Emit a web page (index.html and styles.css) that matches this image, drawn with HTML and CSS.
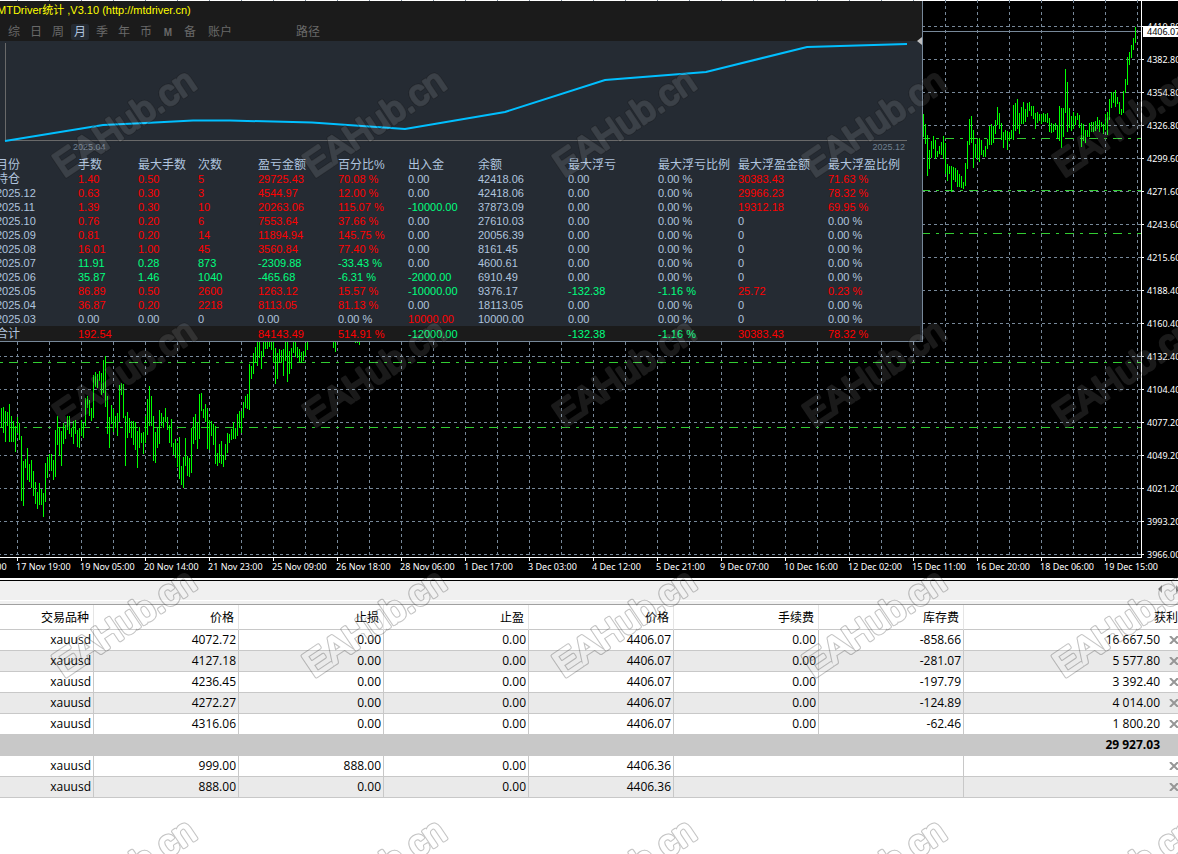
FILE: index.html
```html
<!DOCTYPE html>
<html lang="zh-CN">
<head>
    <meta charset="UTF-8">
    <title>MTDriver统计</title>
    <link rel="stylesheet" href="styles.css">
</head>
<body>

<main class="terminal">
    <section class="chart">
        <div class="plot-row">
            <svg class="plot" aria-label="xauusd">
                <defs>
                    <pattern id="gridX" x="17" y="0" width="32" height="6" patternUnits="userSpaceOnUse">
                        <rect width="1" height="3" fill="#778899"/>
                    </pattern>
                    <pattern id="gridY" x="4" y="26" width="6" height="33" patternUnits="userSpaceOnUse">
                        <rect width="3" height="1" fill="#778899"/>
                    </pattern>
                </defs>
                <rect width="100%" height="100%" fill="url(#gridX)"/>
                <rect width="100%" height="100%" fill="url(#gridY)"/>
                <rect y="31" width="100%" height="1" fill="#778899"/>
                <g id="orderLines" class="order-lines"></g>
                <path id="bars" class="bars"/>
            </svg>
            <div class="price-axis">
                <ul>
                    <li>4410.80</li>
                    <li>4382.80</li>
                    <li>4354.80</li>
                    <li>4326.80</li>
                    <li>4299.60</li>
                    <li>4271.60</li>
                    <li>4243.60</li>
                    <li>4215.60</li>
                    <li>4188.40</li>
                    <li>4160.40</li>
                    <li>4132.40</li>
                    <li>4104.40</li>
                    <li>4077.20</li>
                    <li>4049.20</li>
                    <li>4021.20</li>
                    <li>3993.20</li>
                    <li>3966.00</li>
                </ul>
                <span class="current-price">4406.07</span>
            </div>
        </div>
        <ul class="time-axis">
            <li>14 Nov 10:00</li>
            <li>17 Nov 19:00</li>
            <li>19 Nov 05:00</li>
            <li>20 Nov 14:00</li>
            <li>21 Nov 23:00</li>
            <li>25 Nov 09:00</li>
            <li>26 Nov 18:00</li>
            <li>28 Nov 06:00</li>
            <li>1 Dec 17:00</li>
            <li>3 Dec 03:00</li>
            <li>4 Dec 12:00</li>
            <li>5 Dec 21:00</li>
            <li>9 Dec 07:00</li>
            <li>10 Dec 16:00</li>
            <li>12 Dec 02:00</li>
            <li>15 Dec 11:00</li>
            <li>16 Dec 20:00</li>
            <li>18 Dec 06:00</li>
            <li>19 Dec 15:00</li>
        </ul>

        <div class="stats-panel">
            <header class="stats-header">
                <h1>MTDriver统计 ,V3.10 (http://mtdriver.cn)</h1>
                <nav class="tabs">
                    <button>综</button>
                    <button>日</button>
                    <button>周</button>
                    <button class="active">月</button>
                    <button>季</button>
                    <button>年</button>
                    <button>币</button>
                    <button class="letter">M</button>
                    <button>备</button>
                    <button class="wide">账户</button>
                    <button class="wide path-btn">路径</button>
                </nav>
            </header>
            <svg class="balance" height="100" aria-label="余额">
                <path d="M5.5 1V98.500H907" fill="none" stroke="#696969"/>
                <path d="M5 99L103 83L145 81L193 78.500H230L312 80.500L405 87L505 70L605 38L706 30L807 5L907 2" fill="none" stroke="#00bfff" stroke-width="2"/>
            </svg>
            <div class="balance-dates">
                <span>2025.04</span>
                <span>2025.12</span>
            </div>
            <table class="stats">
                <colgroup>
                    <col class="w-80"><col class="w-60"><col class="w-60"><col class="w-60"><col class="w-80"><col class="w-70">
                    <col class="w-70"><col class="w-90"><col class="w-90"><col class="w-80"><col class="w-90"><col>
                </colgroup>
                <thead>
                    <tr><th>月份</th><th>手数</th><th>最大手数</th><th>次数</th><th>盈亏金额</th><th>百分比%</th><th>出入金</th><th>余额</th><th>最大浮亏</th><th>最大浮亏比例</th><th>最大浮盈金额</th><th>最大浮盈比例</th></tr>
                </thead>
                <tbody id="statsRows"></tbody>
                <tfoot>
                    <tr><td>合计</td><td class="up">192.54</td><td></td><td></td><td class="up">84143.49</td><td class="up">514.91 %</td><td class="down">-12000.00</td><td></td><td class="down">-132.38</td><td class="down">-1.16 %</td><td class="up">30383.43</td><td class="up">78.32 %</td></tr>
                </tfoot>
            </table>
            <svg class="collapse" width="5" height="8"><path d="M0 4L5 0V8Z" fill="#c0c0c0"/></svg>
        </div>
    </section>

    <div class="splitter">
        <svg width="22" height="8"><path d="M2 4L6 0V8ZM24 4L20 0V8Z" fill="#8c8c8c"/></svg>
    </div>

    <section class="orders-wrap">
        <table class="orders">
            <colgroup>
                <col class="symbol"><col class="num"><col class="num"><col class="num"><col class="num"><col class="num"><col class="num"><col>
            </colgroup>
            <thead>
                <tr><th>交易品种</th><th>价格</th><th>止损</th><th>止盈</th><th>价格</th><th>手续费</th><th>库存费</th><th>获利</th></tr>
            </thead>
            <tbody>
                <tr><td>xauusd</td><td>4072.72</td><td>0.00</td><td>0.00</td><td>4406.07</td><td>0.00</td><td>-858.66</td><td>16 667.50<button aria-label="平仓"><svg width="9" height="8"><path d="M1 0L9 8M9 0L1 8"/></svg></button></td></tr>
                <tr><td>xauusd</td><td>4127.18</td><td>0.00</td><td>0.00</td><td>4406.07</td><td>0.00</td><td>-281.07</td><td>5 577.80<button aria-label="平仓"><svg width="9" height="8"><path d="M1 0L9 8M9 0L1 8"/></svg></button></td></tr>
                <tr><td>xauusd</td><td>4236.45</td><td>0.00</td><td>0.00</td><td>4406.07</td><td>0.00</td><td>-197.79</td><td>3 392.40<button aria-label="平仓"><svg width="9" height="8"><path d="M1 0L9 8M9 0L1 8"/></svg></button></td></tr>
                <tr><td>xauusd</td><td>4272.27</td><td>0.00</td><td>0.00</td><td>4406.07</td><td>0.00</td><td>-124.89</td><td>4 014.00<button aria-label="平仓"><svg width="9" height="8"><path d="M1 0L9 8M9 0L1 8"/></svg></button></td></tr>
                <tr><td>xauusd</td><td>4316.06</td><td>0.00</td><td>0.00</td><td>4406.07</td><td>0.00</td><td>-62.46</td><td>1 800.20<button aria-label="平仓"><svg width="9" height="8"><path d="M1 0L9 8M9 0L1 8"/></svg></button></td></tr>
                <tr class="total"><td colspan="8">29 927.03</td></tr>
                <tr><td>xauusd</td><td>999.00</td><td>888.00</td><td>0.00</td><td>4406.36</td><td colspan="2"></td><td><button aria-label="删除"><svg width="9" height="8"><path d="M1 0L9 8M9 0L1 8"/></svg></button></td></tr>
                <tr><td>xauusd</td><td>888.00</td><td>0.00</td><td>0.00</td><td>4406.36</td><td colspan="2"></td><td><button aria-label="删除"><svg width="9" height="8"><path d="M1 0L9 8M9 0L1 8"/></svg></button></td></tr>
            </tbody>
        </table>
    </section>

    <svg class="watermark" aria-hidden="true">
        <defs>
            <mask id="ring" maskUnits="userSpaceOnUse" x="-20" y="-50" width="220" height="80">
                <text class="mark" fill="#fff" stroke="#fff" stroke-width="4">EAHub.cn</text>
                <text class="mark" fill="#000" stroke="#000" stroke-width="2">EAHub.cn</text>
            </mask>
            <pattern id="marks" width="250" height="250" patternUnits="userSpaceOnUse">
                <g transform="translate(64 178) rotate(-34)">
                    <rect x="-20" y="-50" width="220" height="80" fill="#000" opacity="0.25" mask="url(#ring)"/>
                    <text class="mark" fill="#fff" stroke="#fff" stroke-width="3" opacity="0.1">EAHub.cn</text>
                </g>
            </pattern>
        </defs>
        <rect width="100%" height="100%" fill="url(#marks)"/>
    </svg>
</main>

<script src="script.js"></script>
</body>
</html>
```
FILE: styles.css
```css
* {
    box-sizing: border-box;
}
body {
    margin: 0;
    background: white;
    color: black;
    font-family: "Open Sans", "Noto Sans CJK SC", sans-serif;
    font-size: 12px;
}
ul {
    list-style: none;
    margin: 0;
    padding: 0;
}
button {
    border: none;
    background: none;
    padding: 0;
    font: inherit;
    color: inherit;
    cursor: pointer;
}
.terminal {
    position: relative;
    min-height: 100vh;
    overflow: hidden;
}

/* price chart */
.chart {
    position: relative;
    background: black;
    color: white;
    border-top: 1px solid white;
    font-family: "Noto Sans", sans-serif;
    font-size: 9px;
}
.plot-row {
    display: flex;
    height: 558px;
    margin-top: -1px;
}
.plot {
    flex: 1;
    min-width: 0;
    height: 100%;
    border-right: 1px solid white;
    border-bottom: 1px solid white;
}
.bars {
    stroke: #00ff00;
    fill: none;
}
.order-lines line {
    stroke: #32cd32;
    stroke-dasharray: 3 6 9 6;
}
.price-axis {
    position: relative;
    width: 36px;
    height: 570px;
    padding-top: 10px;
    overflow: hidden;
}
.price-axis li {
    position: relative;
    height: 33px;
    line-height: 33px;
    padding-left: 5px;
}
.price-axis li::before {
    content: "";
    position: absolute;
    left: 0;
    top: 16px;
    width: 2px;
    height: 1px;
    background: white;
}
.current-price {
    position: absolute;
    left: 1px;
    top: 26px;
    right: 0;
    height: 11px;
    line-height: 11px;
    padding-left: 4px;
    background: white;
    color: black;
}
.time-axis {
    display: flex;
    height: 20px;
    margin-left: -48px;
    overflow: hidden;
}
.time-axis li {
    position: relative;
    flex: 0 0 64px;
    line-height: 18px;
    white-space: nowrap;
}
.time-axis li::before {
    content: "";
    position: absolute;
    left: 1px;
    top: 0;
    width: 1px;
    height: 3px;
    background: white;
}

/* statistics window over the chart */
.stats-panel {
    position: absolute;
    left: 0;
    top: 0;
    width: 923px;
    background: #252b33;
    border-right: 1px solid #778899;
    border-bottom: 1px solid #778899;
    color: #b0c4de;
    font-family: "Liberation Sans", "Noto Sans CJK SC", sans-serif;
    font-size: 11px;
    overflow: hidden;
}
.stats-header {
    height: 40px;
    background: #1b1b1b;
}
.stats-header h1 {
    margin: 0 0 0 -3px;
    font-size: 11px;
    line-height: 19px;
    height: 23px;
    font-weight: normal;
    color: yellow;
}
.tabs {
    display: flex;
    gap: 4px;
    padding-left: 5px;
    font-size: 12px;
    color: #696969;
}
.tabs button {
    width: 18px;
    height: 16px;
    line-height: 17px;
    border-radius: 2px;
}
.tabs .active {
    background: #252b33;
    color: #b0c4de;
}
.tabs .letter {
    font-size: 10px;
    font-weight: bold;
}
.tabs .wide {
    width: 34px;
}
.tabs .path-btn {
    margin-left: 50px;
}
.balance {
    display: block;
    width: 100%;
    height: 100px;
    margin-top: 1px;
}
.balance-dates {
    display: flex;
    justify-content: space-between;
    padding: 0 17px 0 73px;
    font-size: 9px;
    line-height: 11px;
    color: #708090;
}
.stats {
    width: 100%;
    margin-top: 4px;
    margin-left: -2px;
    border-collapse: collapse;
    table-layout: fixed;
}
.w-60 {
    width: 60px;
}
.w-70 {
    width: 70px;
}
.w-80 {
    width: 80px;
}
.w-90 {
    width: 90px;
}
.stats th,
.stats td {
    height: 14px;
    line-height: 14px;
    padding: 0;
    text-align: left;
    white-space: nowrap;
}
.stats th {
    padding-top: 1px;
    font-size: 12px;
    font-weight: normal;
}
.stats td:first-child,
.stats th:first-child {
    text-indent: -2px;
}
.stats .cjk,
.stats tfoot td:first-child {
    font-size: 12px;
}
.stats tfoot {
    background: #1b1b1b;
}
.stats tfoot td {
    padding-top: 2px;
    line-height: 13px;
}
.up {
    color: red;
}
.down {
    color: #00ff7f;
}
.collapse {
    position: absolute;
    right: 0;
    top: 36px;
}

/* bar between the chart and the orders */
.splitter {
    display: flex;
    justify-content: flex-end;
    height: 25px;
    padding-top: 4px;
    margin-top: 2px;
    background: #f0f0f0;
    border-top: 1px solid #000;
    border-bottom: 1px solid #a0a0a0;
    box-shadow: inset 0 -3px #f0f0f0, inset 0 -4px white;
}

/* open positions and pending orders */
.orders-wrap {
    overflow: hidden;
}
.orders {
    width: 100%;
    border-collapse: separate;
    border-spacing: 0;
    table-layout: fixed;
}
.symbol {
    width: 94px;
}
.num {
    width: 145px;
}
.orders th {
    height: 25px;
    padding: 0 4px 0 0;
    font-weight: normal;
    text-align: right;
    border-right: 1px solid #e5e5e5;
    border-bottom: 1px solid #c8c8c8;
}
.orders th:last-child {
    padding: 0;
    border-right: none;
}
.orders td {
    height: 21px;
    line-height: 20px;
    padding: 0 2px 0 0;
    text-align: right;
    border-right: 1px solid #c8c8c8;
    border-bottom: 1px solid #c8c8c8;
}
.orders td:last-child {
    padding-right: 0;
    border-right: none;
}
.orders tr:nth-child(even) td {
    background: #eaeaea;
}
.orders .total td,
.orders .total td:last-child {
    background: #c8c8c8;
    font-weight: bold;
    padding-right: 18px;
}
.orders button {
    width: 9px;
    margin-left: 9px;
    line-height: 0;
}
.orders button path {
    stroke: #969696;
    stroke-width: 2;
}

.watermark {
    position: absolute;
    left: 0;
    top: 0;
    width: 100%;
    height: 100%;
    pointer-events: none;
}
.mark {
    font-family: "Liberation Sans", sans-serif;
    font-size: 36px;
    stroke-linejoin: round;
}
```
FILE: script.js
```js
// highs and lows, counted in thirds of a pixel below "top"
const series = [
    {
        x: 1, top: 340,
        bars: [
            [204,262],[201,279],[213,306],[216,258],[192,306],[228,306],[243,306],[258,336],[231,279],[249,300],
            [288,483],[363,498],[357,384],[324,420],[372,427],[360,444],[393,468],[426,492],[456,507],[429,495],
            [447,495],[459,531],[369,486],[351,414],[342,390],[342,393],[360,420],[270,411],[228,315],[262,348],
            [273,378],[249,312],[255,297],[228,270],[228,282],[264,291],[243,312],[240,282],[270,321],[264,324],
            [240,288],[250,294],[174,258],[168,204],[180,228],[204,243],[105,234],[96,141],[102,144],[93,123],
            [100,165],[60,159],[48,201],[168,282],[231,324],[195,252],[207,276],[228,264],[219,288],[135,246],
            [129,165],[131,234],[228,378],[216,294],[234,279],[243,294],[243,315],[246,330],[273,384],[261,324],
            [279,309],[276,342],[228,309],[177,285],[138,258],[168,258],[228,363],[276,369],[264,324],[210,312],
            [219,258],[230,264],[204,246],[231,270],[255,309],[237,321],[309,345],[297,354],[309,381],[291,417],
            [378,435],[351,444],[294,378],[348,408],[354,411],[264,400],[231,312],[222,300],[246,327],[162,297],
            [159,213],[207,234],[192,246],[204,327],[240,330],[243,288],[252,315],[258,372],[339,378],[312,369],
            [303,372],[345,381],[312,360],[279,339],[282,309],[267,300],[246,297],[264,297],[222,288],[213,264],
            [213,279],[186,234],[168,204],[162,207],[72,210],[78,118],[39,102],[21,69],[6,78],[6,54],
            [34,87],[0,51],[0,27],[0,27],[0,21],[0,30],[0,66],[24,132],[39,117],[27,66],
            [30,69],[27,108],[0,63],[3,126],[33,102],[24,87],[0,39],[0,51],[21,54],[27,66],
            [36,68],[33,63],[9,48],[0,30]
        ]
    },
    { x: 333, top: 340, bars: [[0,24],[0,36]] },
    { x: 355, top: 340, bars: [[0,9],[0,9],[0,15],[0,6]] },
    {
        x: 923, top: 0,
        bars: [
            [342,412],[372,432],[406,528],[450,507],[423,474],[408,447],[420,476],[453,470],[438,463],[427,466],
            [408,476],[430,522],[492,543],[498,522],[498,575],[500,540],[505,545],[510,560],[522,560],[529,564],
            [546,567],[489,558],[423,507],[357,435],[348,429],[390,504],[432,474],[418,480],[414,486],[420,465],
            [450,470],[438,470],[417,447],[377,435],[372,435],[378,430],[360,402],[321,375],[339,388],[370,420],
            [396,444],[390,420],[393,450],[396,423],[390,417],[315,420],[310,392],[297,387],[339,402],[321,372],
            [306,372],[327,366],[309,351],[306,334],[318,348],[318,357],[339,387],[336,369],[342,363],[342,372],
            [339,365],[342,366],[339,369],[354,397],[369,399],[372,396],[370,390],[376,417],[318,423],[324,444],
            [324,412],[207,340],[246,397],[324,384],[348,393],[336,387],[348,375],[339,360],[345,384],[369,441],
            [372,424],[390,429],[390,412],[369,411],[367,396],[366,396],[364,393],[351,388],[360,396],[366,381],
            [372,403],[342,390],[336,405],[297,360],[276,324],[275,309],[270,321],[291,312],[306,342],[327,345],
            [273,339],[237,279],[171,255],[156,195],[135,174],[114,150],[80,129]
        ]
    }
];

let d = '';
series.forEach(part => {
    part.bars.forEach((bar, i) => {
        const x = part.x + i * 2 + 0.5;
        d += `M${x} ${part.top + Math.round(bar[0] / 3)}V${part.top + Math.round(bar[1] / 3)}`;
    });
});
document.getElementById('bars').setAttribute('d', d);

// open price of each position
[138, 190, 233, 362, 427].forEach(y => {
    const line = document.createElementNS('http://www.w3.org/2000/svg', 'line');
    line.setAttribute('x1', 0);
    line.setAttribute('x2', '100%');
    line.setAttribute('y1', y + 0.5);
    line.setAttribute('y2', y + 0.5);
    document.getElementById('orderLines').appendChild(line);
});

// a leading + marks a gain, a leading - a loss
const stats = [
    ['持仓', '+1.40', '+0.50', '+5', '+29725.43', '+70.08 %', '0.00', '42418.06', '0.00', '0.00 %', '+30383.43', '+71.63 %'],
    ['2025.12', '+0.63', '+0.30', '+3', '+4544.97', '+12.00 %', '0.00', '42418.06', '0.00', '0.00 %', '+29966.23', '+78.32 %'],
    ['2025.11', '+1.39', '+0.30', '+10', '+20263.06', '+115.07 %', '-10000.00', '37873.09', '0.00', '0.00 %', '+19312.18', '+69.95 %'],
    ['2025.10', '+0.76', '+0.20', '+6', '+7553.64', '+37.66 %', '0.00', '27610.03', '0.00', '0.00 %', '0', '0.00 %'],
    ['2025.09', '+0.81', '+0.20', '+14', '+11894.94', '+145.75 %', '0.00', '20056.39', '0.00', '0.00 %', '0', '0.00 %'],
    ['2025.08', '+16.01', '+1.00', '+45', '+3560.84', '+77.40 %', '0.00', '8161.45', '0.00', '0.00 %', '0', '0.00 %'],
    ['2025.07', '~11.91', '~0.28', '~873', '-2309.88', '-33.43 %', '0.00', '4600.61', '0.00', '0.00 %', '0', '0.00 %'],
    ['2025.06', '~35.87', '~1.46', '~1040', '-465.68', '-6.31 %', '-2000.00', '6910.49', '0.00', '0.00 %', '0', '0.00 %'],
    ['2025.05', '+86.89', '+0.50', '+2600', '+1263.12', '+15.57 %', '-10000.00', '9376.17', '-132.38', '-1.16 %', '+25.72', '+0.23 %'],
    ['2025.04', '+36.87', '+0.20', '+2218', '+8113.05', '+81.13 %', '0.00', '18113.05', '0.00', '0.00 %', '0', '0.00 %'],
    ['2025.03', '0.00', '0.00', '0', '0.00', '0.00 %', '+10000.00', '10000.00', '0.00', '0.00 %', '0', '0.00 %']
];

stats.forEach(row => {
    const tr = document.createElement('tr');
    row.forEach(value => {
        const td = document.createElement('td');
        if (value[0] === '+') td.className = 'up';
        // ~ is an unsigned figure of a losing month
        if (value[0] === '-' || value[0] === '~') td.className = 'down';
        if (value === '持仓') td.className = 'cjk';
        td.textContent = value.replace(/^[+~]/, '');
        tr.appendChild(td);
    });
    document.getElementById('statsRows').appendChild(tr);
});
```
